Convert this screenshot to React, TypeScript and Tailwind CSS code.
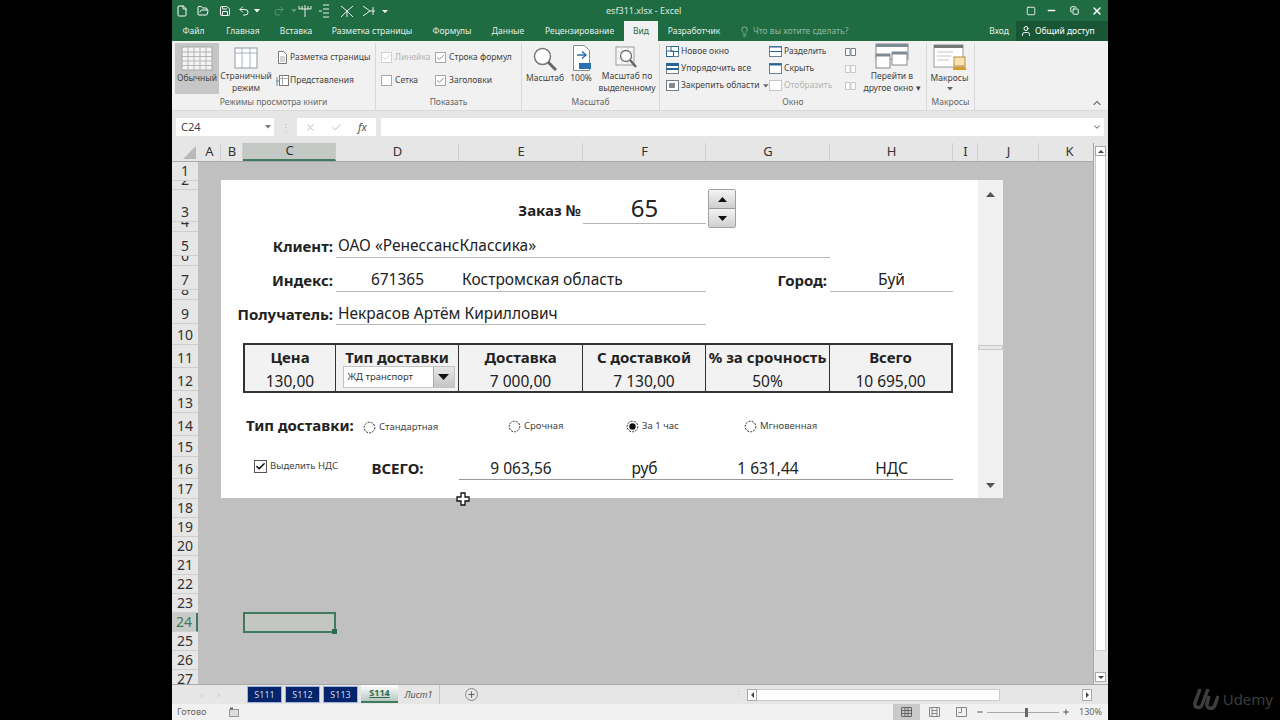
import React from 'react';
import { File, FolderOpen, Save, Undo2, Redo2, Lightbulb, User, ChevronUp, ChevronDown, X, Check, Plus, Minus, Square, Copy } from 'lucide-react';

const tabs = [
  { label: 'Файл', w: 'w-[43px]' },
  { label: 'Главная', w: 'w-[56px]' },
  { label: 'Вставка', w: 'w-[50px]' },
  { label: 'Разметка страницы', w: 'w-[102px]' },
  { label: 'Формулы', w: 'w-[58px]' },
  { label: 'Данные', w: 'w-[54px]' },
  { label: 'Рецензирование', w: 'w-[89px]' },
];

const columns = [
  { label: 'A', w: 'w-[23px]' },
  { label: 'B', w: 'w-[22px]' },
  { label: 'C', w: 'w-[93px]', active: true },
  { label: 'D', w: 'w-[123px]' },
  { label: 'E', w: 'w-[124px]' },
  { label: 'F', w: 'w-[123px]' },
  { label: 'G', w: 'w-[124px]' },
  { label: 'H', w: 'w-[123px]' },
  { label: 'I', w: 'w-[25px]' },
  { label: 'J', w: 'w-[61px]' },
  { label: 'K', w: 'w-[61px]' },
];

const rowHeights = [19, 9, 32, 10, 24, 10, 24, 10, 24, 21, 23, 23, 22, 23, 21, 22, 20, 19, 19, 19, 19, 19, 19, 19, 19, 19, 19];

const tableCols = [
  { head: 'Цена', value: '130,00' },
  { head: 'Тип доставки', value: '' },
  { head: 'Доставка', value: '7 000,00' },
  { head: 'С доставкой', value: '7 130,00' },
  { head: '% за срочность', value: '50%' },
  { head: 'Всего', value: '10 695,00' },
];

const GridIcon = () => (
  <svg width="32" height="25" viewBox="0 0 32 25">
    <rect x="1" y="1" width="30" height="23" fill="#f4f4f4" stroke="#a8a8a8" />
    <path d="M1 6h30M1 10.500h30M1 15h30M1 19.500h30M7 1v23M13 1v23M19 1v23M25 1v23" stroke="#b5b5b5" fill="none" />
  </svg>
);

const PageViewIcon = () => (
  <svg width="24" height="22" viewBox="0 0 24 22">
    <rect x="1" y="1" width="22" height="20" fill="#fff" stroke="#8d9aa3" />
    <path d="M1 6h22M8 1v20M16 1v20" stroke="#9fb3bf" fill="none" />
  </svg>
);

const SmallPage = () => (
  <svg width="12" height="13" viewBox="0 0 12 13" className="shrink-0">
    <path d="M2.500 .500h5l3 3v9h-8z" fill="#fff" stroke="#777" />
    <path d="M4 6h5M4 8h5M4 10h5" stroke="#a9a9a9" />
  </svg>
);

const ViewsIcon = () => (
  <svg width="13" height="13" viewBox="0 0 13 13" className="shrink-0">
    <rect x="3.500" y="1.500" width="9" height="10" fill="#fff" stroke="#777" />
    <path d="M3.500 4.500h9M6.500 1.500v10" stroke="#aaa" />
    <path d="M1 3v9M0 7h3" stroke="#6a8cab" />
  </svg>
);

const ZoomIcon = () => (
  <svg width="24" height="24" viewBox="0 0 24 24">
    <circle cx="9.500" cy="9.500" r="8" fill="#fff" stroke="#777" strokeWidth="1.500" />
    <path d="M15 15l8 8" stroke="#666" strokeWidth="3" />
  </svg>
);

const HundredIcon = () => (
  <svg width="21" height="26" viewBox="0 0 21 26">
    <path d="M2.500 .500h11l5 5v20h-16z" fill="#fff" stroke="#888" />
    <path d="M6 10h8M11 6.500l4 3.500-4 3.500" stroke="#2a6fb0" strokeWidth="1.500" fill="none" />
    <rect x="8" y="18" width="12" height="6" fill="#2a6fb0" />
  </svg>
);

const ZoomSelIcon = () => (
  <svg width="24" height="23" viewBox="0 0 24 23">
    <rect x="1" y="1" width="18" height="18" fill="#f9f9f9" stroke="#999" />
    <path d="M1 6h18M1 12h18M7 1v18M13 1v18" stroke="#d2d2d2" />
    <circle cx="11" cy="10" r="5.500" fill="#ffffffcc" stroke="#6b6b6b" strokeWidth="1.300" />
    <path d="M15 14l6 7" stroke="#666" strokeWidth="2.500" />
  </svg>
);

const WinIcon = ({ kind, dim }: { kind: string; dim?: boolean }) => {
  const c = dim ? '#c7c7c7' : '#6d7f8d';
  return (
    <svg width="13" height="13" viewBox="0 0 13 13" className="shrink-0">
      <rect x=".5" y="1.500" width="12" height="10" fill="#fff" stroke={c} />
      {kind === 'new' && <path d="M.5 6h7v5.500h-7zM5 1.500h7.500v5H5z" fill="#fff" stroke="#2a6496" />}
      {kind === 'arrange' && <path d="M.5 1.500h12v2h-12zM.5 6.500h12v1h-12z" fill="#2a6496" stroke="#2a6496" />}
      {kind === 'freeze' && <rect x="3" y="4" width="6" height="5" fill="#888" />}
      {kind === 'split' && <path d="M.5 2h12M.5 6.500h12" stroke={dim ? c : '#2a6496'} />}
      {kind === 'hide' && <path d="M.5 2.500h12" stroke="#2a6496" strokeWidth="2" />}
    </svg>
  );
};

const SwitchIcon = () => (
  <svg width="34" height="26" viewBox="0 0 34 26">
    <rect x="1" y="1" width="32" height="15" fill="#fff" stroke="#888" />
    <path d="M1 1h32v3H1z" fill="#7d8b96" />
    <rect x="1" y="11" width="14" height="14" fill="#fff" stroke="#888" />
    <rect x="17" y="9" width="15" height="13" fill="#fff" stroke="#888" />
    <path d="M17 9h15v2.500H17zM1 11h14v2.500H1z" fill="#7d8b96" />
  </svg>
);

const MacroIcon = () => (
  <svg width="34" height="27" viewBox="0 0 34 27">
    <rect x="1" y="1" width="29" height="22" fill="#fff" stroke="#999" />
    <path d="M1 1h29v3H1z" fill="#777" />
    <path d="M4 8h16M4 12h14M4 16h12" stroke="#c5c5c5" />
    <rect x="21" y="13" width="11" height="9" fill="#f7e3b2" stroke="#b78d3c" />
    <rect x="20" y="23" width="13" height="3" fill="#d99b2e" />
  </svg>
);

const Caret = ({ className = '' }: { className?: string }) => (
  <svg width="6" height="4" viewBox="0 0 6 4" className={className}>
    <path d="M0 0h6L3 3.500z" fill="currentColor" />
  </svg>
);

const RibbonCheck = ({ checked, dim }: { checked?: boolean; dim?: boolean }) => (
  <span className={`flex h-[11px] w-[11px] shrink-0 items-center justify-center border bg-white ${dim ? 'border-[#d0d0d0] text-[#c4c4c4]' : 'border-[#a8a8a8] text-[#666]'}`}>
    {checked && <Check size={9} strokeWidth={2} />}
  </span>
);

const Radio = ({ on }: { on?: boolean }) => (
  <svg width="13" height="13" viewBox="0 0 13 13" className="shrink-0">
    <circle cx="6.500" cy="6.500" r="5.300" fill="#fff" stroke="#222" strokeDasharray="2 1.200" />
    {on && <circle cx="6.500" cy="6.500" r="3.200" fill="#111" />}
  </svg>
);

const BigBtn = ({ icon, lines, w, active, caret }: { icon: React.ReactNode; lines: string[]; w: string; active?: boolean; caret?: boolean }) => (
  <div className={`flex h-[51px] shrink-0 flex-col items-center ${w} ${active ? 'bg-[#c6c6c6]' : ''}`}>
    <div className="flex h-[28px] items-end justify-center">{icon}</div>
    <div className="mt-[1px] text-center leading-[12px] whitespace-nowrap">
      {lines.map((l) => <div key={l}>{l}</div>)}
      {caret && <Caret className="mx-auto mt-[3px] text-[#666]" />}
    </div>
  </div>
);

const Group = ({ label, w, children }: { label: string; w: string; children: React.ReactNode }) => (
  <div className={`flex shrink-0 flex-col border-r border-[#d8d8d8] ${w}`}>
    <div className="flex h-[53px] items-start">{children}</div>
    <div className="text-center leading-[12px] text-[#666]">{label}</div>
  </div>
);

const Cell = ({ className = '', children }: { className?: string; children?: React.ReactNode }) => (
  <div className={`flex items-center whitespace-nowrap text-[#222] ${className}`}>{children}</div>
);

export default function App() {
  return (
    <div className="flex h-[720px] w-[1280px] overflow-hidden bg-black font-['Roboto',sans-serif] text-[8.5px]">
      <div className="w-[172px] shrink-0" />

      <div className="flex w-[936px] shrink-0 flex-col overflow-hidden">
        {/* title bar */}
        <div className="flex h-[21px] items-center bg-[#1f6b42] text-white">
          <div className="flex w-[20px] justify-center"><File size={12} /></div>
          <div className="flex w-[21px] justify-center"><FolderOpen size={12} /></div>
          <div className="flex w-[23px] justify-center"><Save size={12} /></div>
          <div className="flex w-[16px] justify-center"><Undo2 size={12} /></div>
          <Caret className="ml-[2px] mr-[12px] text-white" />
          <div className="flex w-[14px] justify-center text-[#5d9478]"><Redo2 size={12} /></div>
          <Caret className="ml-[5px] mr-[1px] text-[#5d9478]" />
          <svg width="112" height="14" viewBox="0 0 112 14" fill="none" stroke="#e8f0ec">
            <path d="M1 2v3h12V2M4 2v3M7 1v12M10 2v3" />
            <path d="M25 1h6M25 5h6M25 9h6M25 13h6M24 7h-3" />
            <path d="M43 2l6 5 6-5M49 7v6M43 13l6-6 6 6" />
            <path d="M65 2l7 5-7 5M72 7h5M75 3v8" />
            <path d="M84 6h6l-3 3z" fill="#fff" stroke="none" />
          </svg>
          <div className="ml-[196px] text-[9px] text-[#dbe8e1]">esf311.xlsx - Excel</div>
          <div className="ml-auto flex items-center text-white">
            <div className="flex w-[19px] justify-center"><Square size={10} /></div>
            <div className="flex w-[22px] justify-center"><Minus size={11} strokeWidth={3} /></div>
            <div className="flex w-[24px] justify-center"><Copy size={9} strokeWidth={2.500} /></div>
            <div className="flex w-[22px] justify-center"><X size={12} strokeWidth={3} /></div>
          </div>
        </div>

        {/* tabs */}
        <div className="flex h-[20px] items-stretch bg-[#1f6b42] text-[#e3eee8]">
          {tabs.map((t) => (
            <div key={t.label} className={`flex items-center justify-center ${t.w}`}>{t.label}</div>
          ))}
          <div className="flex w-[34px] items-center justify-center bg-[#f1f1f1] text-[#1f6b42]">Вид</div>
          <div className="flex w-[72px] items-center justify-center">Разработчик</div>
          <div className="ml-[9px] flex items-center gap-[3px] text-[#8fb8a3]">
            <Lightbulb size={11} />
            <span>Что вы хотите сделать?</span>
          </div>
          <div className="ml-auto flex items-center pr-[7px]">Вход</div>
          <div className="flex w-[92px] items-center gap-[3px] bg-[#185636] pl-[4px] text-white">
            <User size={12} />
            <span>Общий доступ</span>
          </div>
        </div>

        {/* ribbon */}
        <div className="flex h-[69px] bg-[#f1f1f1] pt-[2px] text-[#444]">
          <Group label="Режимы просмотра книги" w="w-[204px]">
            <div className="ml-[3px]"><BigBtn active w="w-[44px]" icon={<GridIcon />} lines={['Обычный']} /></div>
            <BigBtn w="w-[54px]" icon={<PageViewIcon />} lines={['Страничный', 'режим']} />
            <div className="ml-[3px] flex flex-col whitespace-nowrap pt-[3px]">
              <div className="flex h-[23px] items-center gap-[2px]"><SmallPage /><span>Разметка страницы</span></div>
              <div className="flex h-[23px] items-center gap-[1px]"><ViewsIcon /><span>Представления</span></div>
            </div>
          </Group>

          <Group label="Показать" w="w-[146px]">
            <div className="ml-[5px] grid grid-cols-[54px_82px] whitespace-nowrap pt-[3px]">
              <div className="flex h-[23px] items-center gap-[3px] text-[#b4b4b4]"><RibbonCheck checked dim /><span>Линейка</span></div>
              <div className="flex h-[23px] items-center gap-[3px]"><RibbonCheck checked /><span>Строка формул</span></div>
              <div className="flex h-[23px] items-center gap-[3px]"><RibbonCheck /><span>Сетка</span></div>
              <div className="flex h-[23px] items-center gap-[3px]"><RibbonCheck checked /><span>Заголовки</span></div>
            </div>
          </Group>

          <Group label="Масштаб" w="w-[138px]">
            <div className="ml-[3px]"><BigBtn w="w-[40px]" icon={<ZoomIcon />} lines={['Масштаб']} /></div>
            <BigBtn w="w-[32px]" icon={<HundredIcon />} lines={['100%']} />
            <BigBtn w="w-[60px]" icon={<ZoomSelIcon />} lines={['Масштаб по', 'выделенному']} />
          </Group>

          <Group label="Окно" w="w-[267px]">
            <div className="ml-[6px] flex w-[103px] shrink-0 flex-col whitespace-nowrap">
              <div className="flex h-[17px] items-center gap-[2px]"><WinIcon kind="new" /><span>Новое окно</span></div>
              <div className="flex h-[17px] items-center gap-[2px]"><WinIcon kind="arrange" /><span>Упорядочить все</span></div>
              <div className="flex h-[17px] items-center gap-[2px]"><WinIcon kind="freeze" /><span>Закрепить области</span><Caret className="ml-[2px] text-[#666]" /></div>
            </div>
            <div className="flex w-[74px] shrink-0 flex-col whitespace-nowrap">
              <div className="flex h-[17px] items-center gap-[2px]"><WinIcon kind="split" /><span>Разделить</span></div>
              <div className="flex h-[17px] items-center gap-[2px]"><WinIcon kind="hide" /><span>Скрыть</span></div>
              <div className="flex h-[17px] items-center gap-[2px] text-[#b4b4b4]"><WinIcon kind="show" dim /><span>Отобразить</span></div>
            </div>
            <div className="flex w-[14px] shrink-0 flex-col items-center">
              {[0, 1, 2].map((i) => (
                <div key={i} className="flex h-[17px] items-center">
                  <svg width="11" height="10" viewBox="0 0 11 10"><path d="M.5 1.500h4.500v7H.5zM6 1.500h4.500v7H6z" fill="#fff" stroke={i === 0 ? '#6d7f8d' : '#c7c7c7'} /></svg>
                </div>
              ))}
            </div>
            <BigBtn w="w-[70px]" icon={<SwitchIcon />} lines={['Перейти в', 'другое окно ▾']} />
          </Group>

          <Group label="Макросы" w="w-[48px]">
            <BigBtn w="w-[45px]" icon={<MacroIcon />} lines={['Макросы']} caret />
          </Group>

          <div className="flex flex-1 items-end justify-end pb-[1px] pr-[5px] text-[#777]"><ChevronUp size={12} strokeWidth={2.500} /></div>
        </div>

        {/* formula bar */}
        <div className="flex h-[33px] items-center gap-[5px] border-t border-[#dadada] bg-[#e6e6e6] px-[4px] text-[#444]">
          <div className="flex h-[18px] w-[98px] items-center justify-between bg-white pl-[5px] pr-[3px] font-['Lato',sans-serif] text-[11px]">
            <span>C24</span>
            <Caret className="text-[#777]" />
          </div>
          <div className="flex w-[13px] justify-center text-[10px] tracking-tighter text-[#bbb]">⋮</div>
          <div className="flex h-[18px] w-[79px] items-center bg-white text-[#b5b5b5]">
            <div className="flex w-[27px] justify-center"><X size={11} /></div>
            <div className="flex w-[25px] justify-center"><Check size={11} /></div>
            <div className="flex w-[27px] justify-center font-['Liberation_Serif',serif] text-[11px] text-[#555] italic">fx</div>
          </div>
          <div className="flex h-[18px] flex-1 items-center justify-end bg-white pr-[2px] text-[#777]"><ChevronDown size={10} strokeWidth={2.500} /></div>
        </div>

        {/* sheet + vertical scrollbar */}
        <div className="flex min-h-0 flex-1 font-['Lato',sans-serif]">
          <div className="flex w-[921px] shrink-0 flex-col overflow-hidden">
            <div className="flex h-[18px] shrink-0 bg-[#e6e6e6] text-[13px] text-[#333]">
              <div className="flex w-[26px] shrink-0 items-end justify-end pb-[2px] pr-[2px]">
                <svg width="13" height="13" viewBox="0 0 13 13"><path d="M13 0v13H0z" fill="#b9b9b9" /></svg>
              </div>
              {columns.map((c) => (
                <div key={c.label} className={`flex shrink-0 items-center justify-center border-r pl-[1px] ${c.w} ${c.active ? 'border-b-2 border-r-[#c9c9c9] border-b-[#3f7a5c] bg-[#c3c8c5]' : 'border-[#d0d0d0]'}`}>{c.label}</div>
              ))}
            </div>

            <div className="flex h-[523px] shrink-0 border-t border-[#a8a8a8]">
              <div className="w-[26px] shrink-0 overflow-hidden bg-[#e6e6e6] text-[14px] text-[#333]">
                {rowHeights.map((h, i) => (
                  <div
                    key={i}
                    style={{ height: h }}
                    className={`flex items-end justify-center overflow-hidden border-b border-[#cfcfcf] leading-[19px] ${i === 23 ? 'border-r-2 border-r-[#3f7a5c] bg-[#c8ccc9] text-[#3f7a5c]' : ''}`}
                  >
                    {i + 1}
                  </div>
                ))}
              </div>

              <div className="relative min-w-0 flex-1 bg-[#c0c0c0]">
                {/* selected cell C24 */}
                <div className="absolute left-[45px] top-[450px] h-[21px] w-[93px] border-2 border-[#3f7a5c] bg-[#c4c6c4]">
                  <div className="absolute -bottom-[3px] -right-[3px] h-[5px] w-[5px] bg-[#2e6b4c]" />
                </div>

                {/* form over the sheet */}
                <div className="absolute left-[23px] top-[18px] grid h-[318px] w-[782px] grid-cols-[22px_93px_123px_124px_123px_124px_123px_25px_25px] grid-rows-[10px_34px_8px_26px_8px_26px_9px_24px_18px_25px_25px_19px_23px_21px_24px_18px] bg-white text-[15.5px]">
                  <Cell className="col-start-2 col-span-3 row-start-2 justify-end pr-[2px] pt-[7px] text-[15px] font-bold">Заказ №</Cell>
                  <Cell className="col-start-5 row-start-2 justify-center border-b border-[#b5b5b5] pt-[2px] text-[24px]">65</Cell>
                  <div className="relative col-start-6 row-start-2">
                    <div className="absolute -top-[1px] left-[2px] flex h-[39px] w-[28px] flex-col overflow-hidden rounded-[2px] border border-[#a0a0a0]">
                      <div className="flex flex-1 items-center justify-center border-b border-[#999] bg-gradient-to-b from-[#f4f4f4] to-[#cfcfcf]"><svg width="9" height="5" viewBox="0 0 9 5"><path d="M0 5h9L4.500 0z" fill="#111" /></svg></div>
                      <div className="flex flex-1 items-center justify-center bg-gradient-to-b from-[#f4f4f4] to-[#cfcfcf]"><svg width="9" height="5" viewBox="0 0 9 5"><path d="M0 0h9L4.500 5z" fill="#111" /></svg></div>
                    </div>
                  </div>

                  <Cell className="col-start-1 col-span-2 row-start-4 justify-end pr-[3px] pt-[2px] text-[15px] font-bold">Клиент:</Cell>
                  <Cell className="col-start-3 col-span-4 row-start-4 border-b border-[#b8b8b8] pl-[2px] pt-[2px]">ОАО «РенессансКлассика»</Cell>

                  <Cell className="col-start-1 col-span-2 row-start-6 justify-end pr-[3px] pt-[2px] text-[15px] font-bold">Индекс:</Cell>
                  <Cell className="col-start-3 row-start-6 justify-center border-b border-[#b8b8b8] pt-[2px]">671365</Cell>
                  <Cell className="col-start-4 col-span-2 row-start-6 border-b border-[#b8b8b8] pl-[3px] pt-[2px]">Костромская область</Cell>
                  <Cell className="col-start-6 row-start-6 justify-end pr-[3px] pt-[2px] text-[15px] font-bold">Город:</Cell>
                  <Cell className="col-start-7 row-start-6 justify-center border-b border-[#b8b8b8] pt-[2px]">Буй</Cell>

                  <Cell className="col-start-1 col-span-2 row-start-8 justify-end pr-[3px] pt-[2px] text-[15px] font-bold">Получатель:</Cell>
                  <Cell className="col-start-3 col-span-3 row-start-8 border-b border-[#b8b8b8] pl-[2px] pt-[2px]">Некрасов Артём Кириллович</Cell>

                  <div className="col-start-2 col-span-6 row-start-10 row-span-2 grid grid-cols-[91px_123px_124px_123px_124px_121px] border-2 border-[#333] bg-[#f2f2f2]">
                    {tableCols.map((c, i) => (
                      <div key={c.head} className={`flex flex-col items-center whitespace-nowrap text-[#222] ${i < 5 ? 'border-r border-[#333]' : ''}`}>
                        <div className="flex h-[23px] items-center pt-[1px] text-[15px] font-bold">{c.head}</div>
                        {c.value ? (
                          <div className="flex h-[23px] items-center pt-[4px]">{c.value}</div>
                        ) : (
                          <div className="ml-[3px] mt-[-2px] flex h-[22px] w-[112px] items-center justify-between border border-[#c4c4c4] bg-white pl-[4px] font-['Noto_Sans',sans-serif] text-[9.5px] text-[#333]">
                            <span>ЖД транспорт</span>
                            <span className="flex h-[20px] w-[21px] items-center justify-center border-l border-[#aaa] bg-gradient-to-b from-[#e8e8e8] to-[#c4c4c4]">
                              <svg width="11" height="6" viewBox="0 0 11 6"><path d="M0 0h11L5.500 6z" fill="#111" /></svg>
                            </span>
                          </div>
                        )}
                      </div>
                    ))}
                  </div>

                  <Cell className="col-start-1 col-span-2 row-start-13 pl-[25px] pt-[3px] text-[15px] font-bold">Тип доставки:</Cell>
                  <div className="col-start-3 row-start-13 flex items-center gap-[3px] pl-[27px] pt-[7px] font-['Noto_Sans',sans-serif] text-[9.5px] text-[#444]"><Radio /><span>Стандартная</span></div>
                  <div className="col-start-4 row-start-13 flex items-center gap-[3px] pl-[49px] pt-[5px] font-['Noto_Sans',sans-serif] text-[9.5px] text-[#444]"><Radio /><span>Срочная</span></div>
                  <div className="col-start-5 row-start-13 flex items-center gap-[3px] pl-[43px] pt-[5px] font-['Noto_Sans',sans-serif] text-[9.5px] text-[#444]"><Radio on /><span>За 1 час</span></div>
                  <div className="col-start-6 row-start-13 flex items-center gap-[3px] pl-[38px] pt-[5px] font-['Noto_Sans',sans-serif] text-[9.5px] text-[#444]"><Radio /><span>Мгновенная</span></div>

                  <div className="col-start-2 row-start-15 flex items-center gap-[3px] pb-[3px] pl-[11px] font-['Noto_Sans',sans-serif] text-[9.5px] whitespace-nowrap text-[#444]">
                    <span className="flex h-[13px] w-[13px] shrink-0 items-center justify-center border border-[#555] bg-white text-black"><Check size={11} strokeWidth={3} /></span>
                    <span>Выделить НДС</span>
                  </div>
                  <Cell className="col-start-3 row-start-15 justify-center pt-[1px] text-[15px] font-bold">ВСЕГО:</Cell>
                  <Cell className="col-start-4 row-start-15 justify-center border-b border-[#9a9a9a] pt-[2px]">9 063,56</Cell>
                  <Cell className="col-start-5 row-start-15 justify-center border-b border-[#9a9a9a] pt-[2px]">руб</Cell>
                  <Cell className="col-start-6 row-start-15 justify-center border-b border-[#9a9a9a] pt-[2px]">1 631,44</Cell>
                  <Cell className="col-start-7 row-start-15 justify-center border-b border-[#9a9a9a] pt-[2px]">НДС</Cell>

                  {/* form scrollbar */}
                  <div className="relative col-start-9 row-span-full row-start-1 bg-[#f0f0f0] text-[#555]">
                    <svg width="9" height="5" viewBox="0 0 9 5" className="absolute left-[8px] top-[12px]"><path d="M0 5h9L4.500 0z" fill="#555" /></svg>
                    <div className="absolute left-0 top-[165px] h-[5px] w-[25px] rounded-[1px] border border-[#c8c8c8] bg-[#e9e9e9]" />
                    <svg width="9" height="5" viewBox="0 0 9 5" className="absolute bottom-[10px] left-[8px]"><path d="M0 0h9L4.500 5z" fill="#555" /></svg>
                  </div>
                </div>

                {/* mouse cursor */}
                <svg width="14" height="14" viewBox="0 0 14 14" className="absolute left-[258px] top-[330px]">
                  <path d="M5 1h4v4h4v4H9v4H5V9H1V5h4z" fill="#fff" stroke="#111" strokeWidth="1.300" />
                </svg>
              </div>
            </div>
          </div>

          {/* vertical scrollbar */}
          <div className="flex w-[15px] shrink-0 flex-col border-l border-[#a8a8a8] bg-[#e6e6e6] pb-[2px] pl-[1px] pr-[2px] pt-[3px]">
            <div className="flex h-[10px] items-center justify-center border border-[#aaa] bg-white"><svg width="6" height="3" viewBox="0 0 6 3"><path d="M0 3h6L3 0z" fill="#444" /></svg></div>
            <div className="h-[495px] border-x border-b border-[#ccc] bg-white" />
            <div className="flex-1" />
            <div className="flex h-[10px] items-center justify-center border border-[#aaa] bg-white"><svg width="6" height="3" viewBox="0 0 6 3"><path d="M0 0h6L3 3z" fill="#444" /></svg></div>
          </div>
        </div>

        {/* sheet tabs */}
        <div className="flex h-[20px] shrink-0 items-stretch border-t border-[#a8a8a8] bg-[#e6e6e6] text-[9px]">
          <div className="flex w-[75px] shrink-0 items-center justify-end gap-[14px] pr-[27px] text-[#c8c8c8]"><span>‹</span><span>›</span></div>
          {['S111', 'S112', 'S113'].map((s) => (
            <div key={s} className="mb-[1px] mr-[3px] mt-[1px] flex w-[35px] items-center justify-center border border-[#9db5d8] bg-[#04246b] text-[#c7d4ec]">{s}</div>
          ))}
          <div className="mb-[1px] flex w-[37px] items-center justify-center border-b-2 border-[#3f7a5c] bg-gradient-to-b from-white to-[#b6c8c4] font-bold text-[#2c6a4a] underline">S114</div>
          <div className="flex w-[42px] items-center justify-center border-r border-[#c6c6c6] text-[#555] italic">Лист1</div>
          <div className="ml-[24px] flex w-[14px] items-center justify-center">
            <span className="flex h-[13px] w-[13px] items-center justify-center rounded-full border border-[#888] text-[#666]"><Plus size={9} strokeWidth={3} /></span>
          </div>
          <div className="ml-auto flex items-center pr-[16px]">
            <span className="mr-[4px] text-[#c2c2c2]">⋮</span>
            <div className="flex h-[12px] w-[10px] items-center justify-center border border-[#aaa] bg-white"><svg width="3" height="6" viewBox="0 0 3 6"><path d="M3 0v6L0 3z" fill="#444" /></svg></div>
            <div className="h-[12px] w-[243px] border-y border-r border-[#ccc] bg-white" />
            <div className="w-[82px]" />
            <div className="flex h-[12px] w-[10px] items-center justify-center border border-[#aaa] bg-white"><svg width="3" height="6" viewBox="0 0 3 6"><path d="M0 0v6l3-3z" fill="#444" /></svg></div>
          </div>
        </div>

        {/* status bar */}
        <div className="flex h-[16px] shrink-0 items-center bg-[#f1f1f1] text-[9px] text-[#666]">
          <span className="ml-[5px] w-[52px]">Готово</span>
          <svg width="10" height="10" viewBox="0 0 10 10"><rect x=".5" y="2.500" width="9" height="7" fill="#ddd" stroke="#999" /><path d="M1 .5h3v2H1z" fill="#666" /></svg>
          <div className="ml-auto flex h-full items-center">
            <div className="flex h-full w-[27px] items-center justify-center bg-[#c9c9c9]">
              <svg width="11" height="10" viewBox="0 0 11 10"><path d="M.5.5h10v9H.5zM.5 3.500h10M.5 6.500h10M4 .5v9M7 .5v9" fill="none" stroke="#666" /></svg>
            </div>
            <div className="flex w-[28px] justify-center">
              <svg width="11" height="10" viewBox="0 0 11 10"><path d="M.5.5h10v9H.5zM3 .5v9M8 .5v9M3 3.500h5M3 6.500h5" fill="none" stroke="#888" /></svg>
            </div>
            <div className="flex w-[26px] justify-center">
              <svg width="11" height="10" viewBox="0 0 11 10"><path d="M.5.5h10v9H.5zM5.500.5v5h-3" fill="none" stroke="#888" /></svg>
            </div>
            <Minus size={8} strokeWidth={3} className="ml-[2px] text-[#555]" />
            <div className="relative mx-[3px] h-px w-[72px] bg-[#aaa]">
              <div className="absolute -top-[4px] left-[38px] h-[9px] w-[3px] bg-[#666]" />
            </div>
            <Plus size={8} strokeWidth={3} className="text-[#555]" />
            <span className="ml-[9px] w-[29px]">130%</span>
          </div>
        </div>
      </div>

      <div className="flex w-[172px] shrink-0 items-end justify-end pb-[9px] pr-[7px]">
        <div className="flex items-center gap-[4px] text-[#3d3d3d]">
          <svg width="26" height="24" viewBox="0 0 26 24" fill="none" stroke="currentColor" strokeWidth="3.500">
            <path d="M7 2L2 16c-1 5 5 6 7 2l6-16" />
            <path d="M16 9l-2 8c-1 5 6 6 8 1l3-9" />
          </svg>
          <span className="text-[15px]">Udemy</span>
        </div>
      </div>
    </div>
  );
}
